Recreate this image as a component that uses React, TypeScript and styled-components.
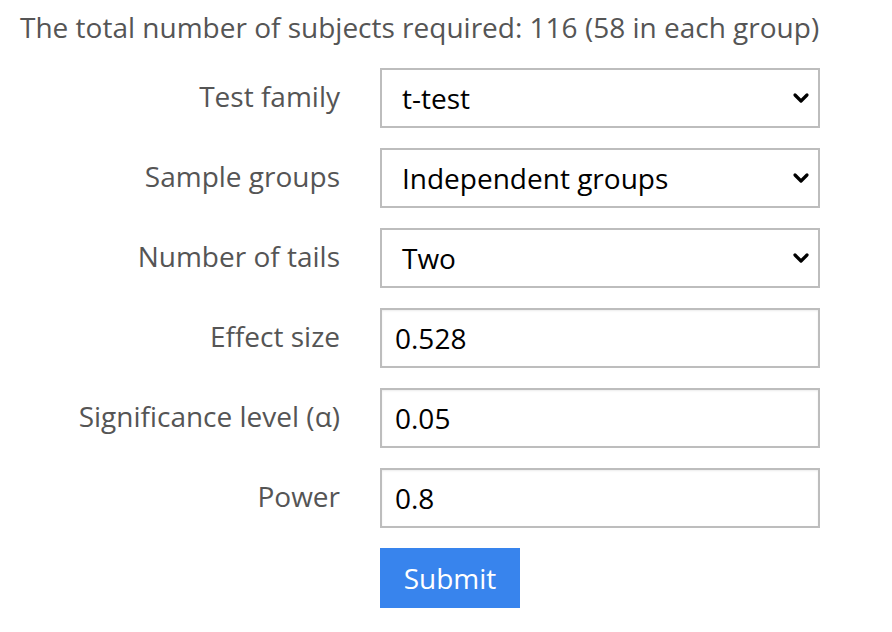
import React from "react";
import styled, { createGlobalStyle } from "styled-components";

const Global = createGlobalStyle`
  html, body { margin: 0; padding: 0; background: #fff; }
  body { font-family: "Open Sans", "Noto Sans", sans-serif; }
`;

const Page = styled.div`
  padding: 9px 20px 0 20px;
  width: 852px;
`;

const Heading = styled.div`
  font-size: 28px;
  line-height: 36px;
  color: #555;
  margin-bottom: 23px;
`;

const Form = styled.form`
  display: grid;
  grid-template-columns: 320px 440px;
  column-gap: 40px;
  row-gap: 20px;
  align-items: center;
`;

const Label = styled.label`
  text-align: right;
  font-size: 28px;
  color: #555;
  padding-bottom: 5px;
`;

const SelectBox = styled.div`
  position: relative;
  height: 60px;
  box-sizing: border-box;
  border: 2px solid #bdbdbd;
  display: flex;
  align-items: center;
  padding: 0 20px;
  font-size: 28px;
  color: #000;
  background: #fff;
`;

const Chevron = styled.svg`
  position: absolute;
  right: 8px;
  top: 50%;
  margin-top: -6px;
  width: 18px;
  height: 12px;
`;

const Input = styled.input`
  height: 60px;
  box-sizing: border-box;
  border: 2px solid #bdbdbd;
  box-shadow: inset 0 1px 2px rgba(0,0,0,0.08);
  padding: 0 13px;
  font-family: "Open Sans", "Noto Sans", sans-serif;
  font-size: 28px;
  color: #000;
  outline: none;
  width: 100%;
`;

const Button = styled.button`
  grid-column: 2;
  justify-self: start;
  width: 140px;
  height: 60px;
  border: none;
  background: #3884ed;
  color: #fff;
  font-family: "Open Sans", "Noto Sans", sans-serif;
  font-size: 28px;
  padding: 0;
`;

const Select = ({ value }: { value: string }) => (
  <SelectBox>
    {value}
    <Chevron viewBox="0 0 18 12">
      <polyline points="3,3 9,9 15,3" fill="none" stroke="#000" strokeWidth="3.2" strokeLinecap="round" strokeLinejoin="round" />
    </Chevron>
  </SelectBox>
);

export default function App() {
  return (
    <Page>
      <Global />
      <Heading>The total number of subjects required: 116 (58 in each group)</Heading>
      <Form onSubmit={(e) => e.preventDefault()}>
        <Label>Test family</Label>
        <Select value="t-test" />
        <Label>Sample groups</Label>
        <Select value="Independent groups" />
        <Label>Number of tails</Label>
        <Select value="Two" />
        <Label>Effect size</Label>
        <Input defaultValue="0.528" />
        <Label>Significance level (α)</Label>
        <Input defaultValue="0.05" />
        <Label>Power</Label>
        <Input defaultValue="0.8" />
        <Button type="submit">Submit</Button>
      </Form>
    </Page>
  );
}
